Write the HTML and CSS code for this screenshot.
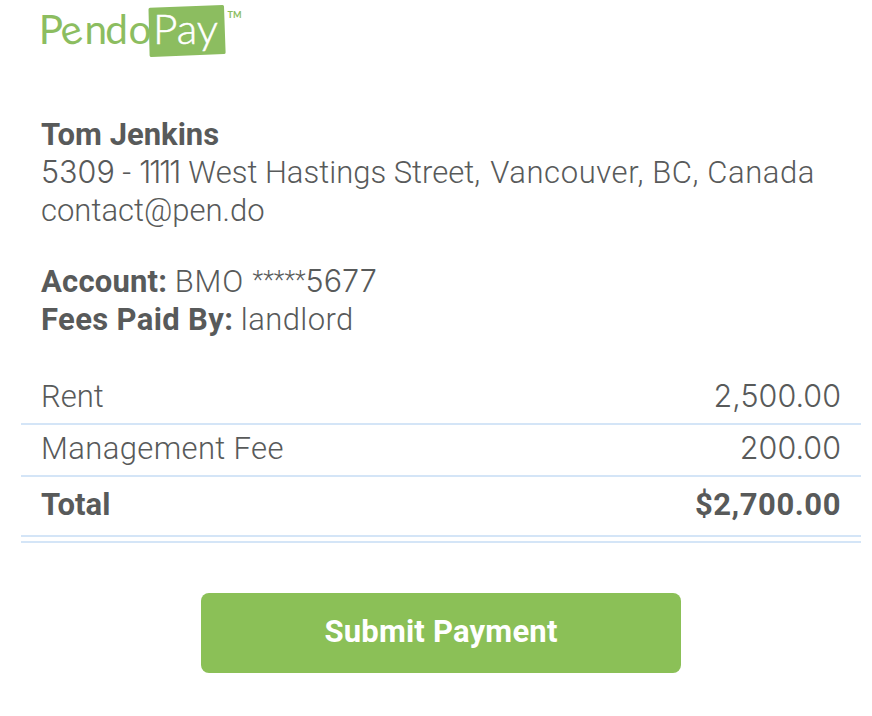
FILE: index.html
```html
<!DOCTYPE html>
<html lang="en">
<head>
<meta charset="utf-8">
<title>PendoPay</title>
<link rel="stylesheet" href="styles.css">
</head>
<body>
<main class="page">
  <header class="logo">
    <svg width="220" height="60" viewBox="30 0 220 60" role="img" aria-label="PendoPay">
      <text class="logo-word" x="38.800 64.500 84.500 105.300 128.500" y="44 46.900 44 44 44" rotate="0 -18 0 0 0">Pendo</text>
      <path class="logo-tile" d="M150 7.8 222.5 5Q224 5 224 6.5L225.6 52.5Q225.6 54 224 54.1L151.500 57Q149.700 57 149.600 55.500L148.500 9.500Q148.500 7.900 150 7.800Z"/>
      <text class="logo-pay" x="153" y="44" textLength="65" lengthAdjust="spacingAndGlyphs">Pay</text>
      <text class="logo-tm" x="227.500" y="18" textLength="14" lengthAdjust="spacingAndGlyphs">TM</text>
    </svg>
  </header>

  <address class="block">
    <div class="line"><b>Tom Jenkins</b></div>
    <div class="line"><span class="num">5309</span> - <span class="num ones">1111</span> West Hastings Street, <span class="city">Vancouver, BC, Canada</span></div>
    <div class="line">contact@pen.do</div>
  </address>

  <section class="block account">
    <div class="line"><b class="account-label">Account:</b> <span class="bank">BMO</span> <span class="mask">*****</span><span class="num">5677</span></div>
    <div class="line"><b class="fees-label">Fees Paid By:</b> <span class="payer">landlord</span></div>
  </section>

  <section class="charges">
    <div class="row rent"><span>Rent</span><span class="num">2,500.00</span></div>
    <div class="row fee"><span class="fee-label">Management Fee</span><span class="num">200.00</span></div>
    <div class="row total"><b>Total</b><b class="sum">$2,700.00</b></div>
  </section>

  <button class="submit" type="button">Submit Payment</button>
</main>
</body>
</html>
```
FILE: styles.css
```css
* { box-sizing: border-box; }
body {
  margin: 0;
  background: #fff;
  color: #585a5a;
  font: 300 31px/38px Roboto, "Liberation Sans", sans-serif;
}
b { font-weight: 700; }
.page { padding: 0 11px 0 21px; height: 716px; overflow: hidden; }
.logo { height: 60px; padding-left: 9px; }
.logo svg { display: block; }
.logo text { font-family: Lato, Roboto, sans-serif; font-size: 40.500px; font-weight: 400; fill: #8cbd60; }
.logo-tile { fill: #8cbd60; }
.logo .logo-pay { fill: #fff; font-weight: 300; stroke: #fff; stroke-width: .500px; }
.logo .logo-tm { font-size: 9px; font-weight: 700; }
.block { padding-left: 20px; font-style: normal; margin-top: 56px; }
.line { height: 38px; white-space: nowrap; }
.num { font-family: Inter, Roboto, sans-serif; font-size: 30.500px; line-height: 30px; }
.ones { letter-spacing: -2px; margin: 0 1.500px 0 .500px; }
.city { letter-spacing: .600px; margin-left: 2.500px; }
.account { margin-top: 33px; }
.account-label { letter-spacing: .200px; }
.fees-label { letter-spacing: .350px; }
.bank { letter-spacing: .800px; }
.payer { letter-spacing: .400px; }
.mask { font-size: 25px; line-height: 25px; display: inline-block; margin-left: 1px; transform: translateY(-3px); }
.charges { margin-top: 36px; width: 840px; border-bottom: 2px solid #d4e5f7; padding-bottom: 4px; }
.row {
  display: flex;
  justify-content: space-between;
  align-items: baseline;
  height: 52px;
  padding: 5px 20px 0;
  border-bottom: 2px solid #d4e5f7;
}
.rent { height: 50px; padding-top: 3px; }
.total { height: 60px; padding-top: 9px; }
.fee-label { letter-spacing: .380px; }
.sum { letter-spacing: .550px; }
.submit {
  display: block;
  width: 480px;
  height: 80px;
  margin: 50px 0 0 180px;
  padding: 0 0 2px;
  border: 0;
  border-radius: 8px;
  background: #8bc057;
  color: #fff;
  font: inherit;
  font-weight: 700;
  letter-spacing: .200px;
}
```
